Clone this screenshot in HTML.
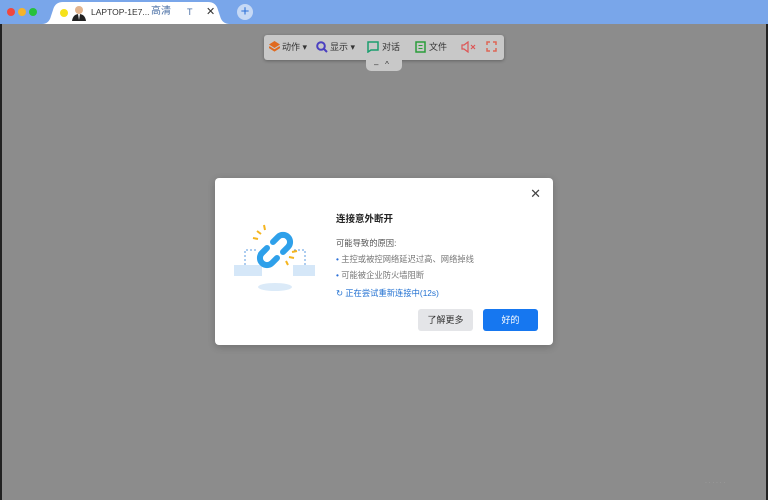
<!DOCTYPE html>
<html><head><meta charset="utf-8"><style>
*{margin:0;padding:0;box-sizing:border-box}
body{width:768px;height:500px;overflow:hidden;background:#8c8c8c;font-family:"Liberation Sans","Noto Sans CJK SC",sans-serif;position:relative}
.top{position:absolute;left:0;top:0;width:768px;height:24px;background:#79a6ea}
.dot{position:absolute;top:8px;width:8px;height:8px;border-radius:50%}
.main{position:absolute;left:0;top:24px;width:768px;height:476px;border-left:2px solid #222;border-right:2px solid #222;background:#8c8c8c}
.tb{position:absolute;left:264px;top:35px;width:240px;height:25px;background:#c8c8c8;border-radius:3px;box-shadow:0 1px 3px rgba(0,0,0,.3);font-size:9px;color:#333}
.tb span{position:absolute;top:7px;line-height:11px}
.tab2{position:absolute;left:366px;top:60px;width:36px;height:11px;background:#c8c8c8;border-radius:0 0 5px 5px}
.dlg{position:absolute;left:215px;top:178px;width:338px;height:167px;background:#fff;border-radius:4px;box-shadow:0 2px 8px rgba(0,0,0,.2)}
.t{position:absolute;font-size:8.3px;color:#555;white-space:nowrap;line-height:11px}
.btn{position:absolute;top:131px;width:55px;height:22px;border-radius:3px;font-size:9px;text-align:center;line-height:22px}
</style></head><body>
<div class="top">
<div class="dot" style="left:7px;background:#f0473f"></div>
<div class="dot" style="left:18px;background:#f5b32b"></div>
<div class="dot" style="left:29px;background:#27c13c"></div>
<svg style="position:absolute;left:42px;top:2px" width="196" height="22"><path d="M0 22Q7 22 9 14L11 8Q13 0 21 0H166Q174 0 176 8L178 14Q180 22 188 22Z" fill="#fff"/></svg>
<div style="position:absolute;left:60px;top:9px;width:8px;height:8px;border-radius:50%;background:#f6e21a"></div>
<svg style="position:absolute;left:72px;top:5px" width="14" height="16"><circle cx="7" cy="5" r="4" fill="#e2b48e"/><path d="M0 16Q1 9 7 9Q13 9 14 16Z" fill="#222"/><path d="M6 9h2l-1 6z" fill="#fff"/></svg>
<span style="position:absolute;left:91px;top:7px;font-size:8.5px;color:#333;line-height:11px">LAPTOP-1E7...</span>
<span style="position:absolute;left:151px;top:6px;font-size:10px;color:#4a6fa5;line-height:12px">高清</span>
<span style="position:absolute;left:187px;top:7px;font-size:9px;color:#4a6fa5;line-height:11px">T</span>
<span style="position:absolute;left:206px;top:6px;font-size:11px;color:#333;line-height:13px">✕</span>
<div style="position:absolute;left:237px;top:4px;width:16px;height:16px;border-radius:50%;background:#c6d9f5;color:#2a6fd8;font-size:15px;line-height:15px;text-align:center">+</div>
</div>
<div class="main"></div>
<div class="tb">
<svg style="position:absolute;left:5px;top:6px" width="11" height="12"><path d="M5.5 0L11 3.5 5.5 7 0 3.5Z" fill="#e06a20"/><path d="M0 6l5.5 3.5L11 6" fill="none" stroke="#e06a20" stroke-width="2"/></svg><span style="left:18px">动作 ▾</span>
<svg style="position:absolute;left:52px;top:6px" width="12" height="12"><circle cx="5" cy="5" r="3.8" fill="none" stroke="#4a3fc0" stroke-width="2"/><path d="M8 8l3 3" stroke="#4a3fc0" stroke-width="2"/></svg><span style="left:66px">显示 ▾</span>
<svg style="position:absolute;left:103px;top:6px" width="12" height="12"><path d="M1 1h10v8H4l-3 2z" fill="none" stroke="#1a9e6e" stroke-width="1.5"/></svg><span style="left:118px">对话</span>
<svg style="position:absolute;left:151px;top:6px" width="11" height="12"><rect x="1" y="1" width="9" height="10" fill="none" stroke="#2a9e3a" stroke-width="1.5"/><path d="M3.5 4.5h4M3.5 7.5h4" stroke="#2a9e3a"/></svg><span style="left:165px">文件</span>
<svg style="position:absolute;left:197px;top:6px" width="16" height="12"><path d="M1 4h2l4-3v10L3 8H1z" fill="none" stroke="#d55" stroke-width="1.2"/><path d="M10 4l4 4M14 4l-4 4" stroke="#d55" stroke-width="1.2"/></svg>
<svg style="position:absolute;left:222px;top:6px" width="11" height="11"><path d="M1 4V1h3M7 1h3v3M10 7v3H7M4 10H1V7" fill="none" stroke="#d65" stroke-width="1.5"/></svg>
</div>
<div class="tab2"><span style="position:absolute;left:8px;top:0;font-size:8px;color:#333">–&nbsp;&nbsp;&nbsp;^</span></div>
<div class="dlg">
<span style="position:absolute;right:12px;top:8px;font-size:13px;color:#444">✕</span>
<svg style="position:absolute;left:15px;top:42px" width="90" height="75" viewBox="0 0 90 75">
<ellipse cx="45" cy="67" rx="17" ry="4" fill="#dbeaf8"/>
<rect x="4" y="45" width="28" height="11" fill="#d5e7f8"/>
<rect x="63" y="45" width="22" height="11" fill="#d5e7f8"/>
<path d="M15 45V30h12M75 45V30H64" fill="none" stroke="#5b9be0" stroke-dasharray="2 2"/>
<path d="M43 22l5-5a7 7 0 0 1 10 10l-5 5" fill="none" stroke="#2ea0ea" stroke-width="6" stroke-linecap="round"/>
<path d="M47 38l-5 5a7 7 0 0 1-10-10l5-5" fill="none" stroke="#2ea0ea" stroke-width="6" stroke-linecap="round"/>
<path d="M35 30l-4 4" stroke="#2ea0ea" stroke-width="6" stroke-linecap="round"/>
<path d="M27 11l4 3M34 5l1 5M23 18l5 1M59 37l5 1M56 41l2 4M62 32l5-1" stroke="#f5b51f" stroke-width="2"/>
</svg>
<div class="t" style="left:121px;top:35px;font-size:9.5px;color:#222;font-weight:bold;line-height:13px">连接意外断开</div>
<div class="t" style="left:121px;top:60px">可能导致的原因:</div>
<div class="t" style="left:121px;top:76px;color:#777"><span style="color:#2a6fd8">•</span> 主控或被控网络延迟过高、网络掉线</div>
<div class="t" style="left:121px;top:92px;color:#777"><span style="color:#2a6fd8">•</span> 可能被企业防火墙阻断</div>
<div class="t" style="left:121px;top:110px;color:#1f6fd1">↻ 正在尝试重新连接中(12s)</div>
<div class="btn" style="left:203px;background:#e4e5e8;color:#333">了解更多</div>
<div class="btn" style="left:268px;background:#1677f0;color:#fff">好的</div>
</div>
<div style="position:absolute;left:705px;top:480px;font-size:6px;color:#a8a8a8">· · · · · ·</div>
</body></html>
